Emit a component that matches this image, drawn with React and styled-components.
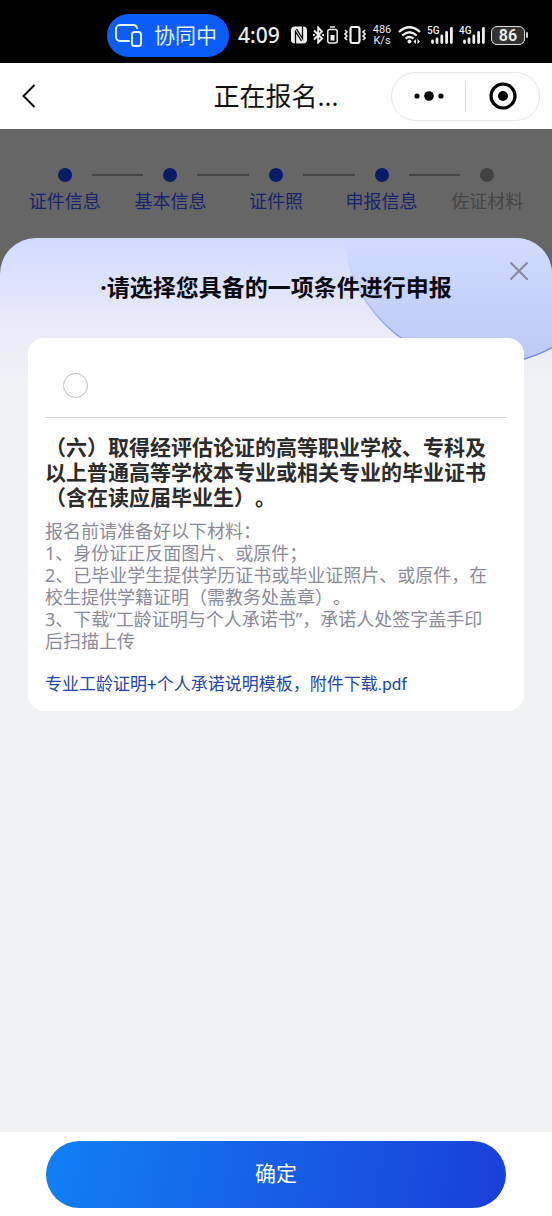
import React from "react";
import styled, { createGlobalStyle } from "styled-components";

const GlobalStyle = createGlobalStyle`
  *, *::before, *::after { box-sizing: border-box; }
  body {
    margin: 0;
    background: #f0f2f4;
    font-family: "Noto Sans", "Noto Sans CJK SC", sans-serif;
    text-spacing-trim: space-all;
  }
  button { font-family: inherit; }
  h1, h2, h3, p, ol { margin: 0; padding: 0; font-size: inherit; }
`;

const Page = styled.div`
  display: flex;
  flex-direction: column;
  min-height: 100vh;
  background: #666;
`;

const StatusBar = styled.header`
  display: flex;
  align-items: center;
  justify-content: flex-end;
  height: 63px;
  padding: 7px 24px 0 0;
  background: #000;
  color: #eee;
`;

const SyncPill = styled.div`
  display: flex;
  align-items: center;
  gap: 12px;
  height: 43px;
  padding: 0 12px 0 8px;
  margin-right: 9px;
  border-radius: 22px;
  background: #0b5cf8;
  color: #e2f1ff;
  font-size: 21px;
  line-height: 28px;
  white-space: nowrap;
`;

const Clock = styled.time`
  width: 53px;
  font-size: 21px;
  font-weight: 500;
  line-height: 28px;
`;

const StatusIcons = styled.div`
  display: flex;
  align-items: center;
  gap: 6px;
`;

const IconPair = styled.div`
  display: flex;
  align-items: center;
  gap: 3px;
`;

const NetSpeed = styled.div`
  width: 20px;
  font-family: Roboto, sans-serif;
  font-size: 11px;
  font-weight: 400;
  line-height: 11px;
  text-align: center;
`;

const SignalBox = styled.div`
  position: relative;
  display: flex;
  width: 26px;
  height: 19px;
`;

const SignalTag = styled.span`
  position: absolute;
  top: 0;
  left: 0;
  font-family: Roboto, sans-serif;
  font-size: 10px;
  font-weight: 500;
  line-height: 10px;
`;

const Battery = styled.div`
  display: flex;
  align-items: center;
  gap: 1px;
`;

const BatteryBody = styled.div`
  width: 34px;
  height: 19px;
  border: 1px solid #ddd;
  border-radius: 6px;
  background: #333;
  font-family: Roboto, sans-serif;
  font-size: 16px;
  font-weight: 600;
  line-height: 17px;
  text-align: center;
`;

const BatteryNub = styled.div`
  width: 2px;
  height: 6px;
  border-radius: 1px;
  background: #ccc;
`;

const NavBar = styled.nav`
  display: grid;
  grid-template-columns: 1fr auto 1fr;
  align-items: center;
  height: 66px;
  padding: 0 12px;
  background: #fff;
  color: #111;
`;

const IconButton = styled.button`
  display: flex;
  align-items: center;
  justify-content: center;
  width: ${(p) => p.$width}px;
  height: ${(p) => p.$height}px;
  padding: 0;
  border: 0;
  background: transparent;
  color: inherit;
  cursor: pointer;
`;

const NavTitle = styled.h1`
  font-size: 26px;
  font-weight: 400;
  line-height: 36px;
`;

const Capsule = styled.div`
  display: flex;
  align-items: center;
  justify-self: end;
  height: 49px;
  border: 1px solid #e6e6e6;
  border-radius: 25px;
`;

const CapsuleDivider = styled.span`
  width: 1px;
  height: 31px;
  background: #e2e2e2;
`;

const Steps = styled.ol`
  display: flex;
  height: 109px;
  padding: 39px 12px 0;
  list-style: none;
`;

const Step = styled.li`
  flex: 1;
  display: flex;
  flex-direction: column;
  gap: 6px;
  color: ${(p) => (p.$done ? "#16246b" : "#454545")};
  font-size: 18px;
  line-height: 26px;
  text-align: center;
  white-space: nowrap;
`;

const StepTrack = styled.div`
  display: grid;
  grid-template-columns: 1fr 14px 1fr;
  align-items: center;
  column-gap: 20px;
`;

const StepLine = styled.span`
  height: 2px;
  background: ${(p) => (p.$hidden ? "transparent" : "#454545")};
`;

const StepDot = styled.span`
  width: 14px;
  height: 14px;
  border-radius: 50%;
  background: ${(p) => (p.$done ? "#0a1c66" : "#424242")};
`;

const Sheet = styled.section`
  position: relative;
  flex: 1;
  display: flex;
  flex-direction: column;
  overflow: hidden;
  border-radius: 36px 36px 0 0;
  background: linear-gradient(#d0dbff 0, #eaebf9 90px, #f0f2f4 150px);
`;

const Decoration = styled.svg`
  position: absolute;
  top: 0;
  right: 0;
`;

const CloseButton = styled(IconButton)`
  position: absolute;
  top: 16px;
  right: 16px;
  color: #858a9b;
`;

const SheetBody = styled.div`
  position: relative;
  flex: 1;
  padding: 32px 28px;
`;

const SheetTitle = styled.h2`
  margin-bottom: 34px;
  color: #0a0a12;
  font-size: 23px;
  font-weight: 700;
  line-height: 34px;
  text-align: center;
`;

const Card = styled.article`
  padding: 0 17px 15px;
  border-radius: 16px;
  background: #fff;
`;

const CardHead = styled.div`
  display: flex;
  align-items: center;
  height: 80px;
  padding: 16px 18px 0;
  border-bottom: 1px solid #d8d8d8;
`;

const Radio = styled.input`
  appearance: none;
  width: 25px;
  height: 25px;
  margin: 0;
  border: 1px solid #bdbdbd;
  border-radius: 50%;
  background: #fff;
  &:checked { border: 7px solid #1a5be4; }
`;

const CardTitle = styled.label`
  display: block;
  padding: 17px 12px 0 0;
  color: #2b2b2b;
  font-size: 21px;
  font-weight: 700;
  line-height: 25px;
`;

const Notes = styled.div`
  padding: 10px 12px 0 0;
  color: #8a8a99;
  font-size: 18px;
  line-height: 22px;
`;

const Download = styled.a`
  display: block;
  margin-top: 20px;
  color: #2346a5;
  font-family: Roboto, "Noto Sans CJK SC", sans-serif;
  font-size: 17px;
  line-height: 24px;
  text-decoration: none;
`;

const Footer = styled.footer`
  padding: 9px 46px 8px;
  background: #fff;
`;

const Confirm = styled.button`
  display: block;
  width: 100%;
  height: 67px;
  padding: 0 0 4px;
  border: 0;
  border-radius: 34px;
  background: linear-gradient(100deg, #0f80f5, #1662e8 45%, #193fd8);
  color: #fff;
  font-size: 21px;
  line-height: 30px;
  cursor: pointer;
`;

const steps = [
  { label: "证件信息", done: true },
  { label: "基本信息", done: true },
  { label: "证件照", done: true },
  { label: "申报信息", done: true },
  { label: "佐证材料", done: false },
];

const notes = [
  "报名前请准备好以下材料：",
  "1、身份证正反面图片、或原件；",
  "2、已毕业学生提供学历证书或毕业证照片、或原件，在校生提供学籍证明（需教务处盖章）。",
  "3、下载“工龄证明与个人承诺书”，承诺人处签字盖手印后扫描上传",
];

const SyncIcon = () => (
  <svg width="27" height="23" viewBox="0 0 27 23" fill="none" stroke="currentColor" strokeWidth="2" strokeLinecap="round">
    <path d="M14 17H5a4 4 0 0 1-4-4V5a4 4 0 0 1 4-4h13a4 4 0 0 1 4 3" />
    <rect x="17" y="8" width="9" height="14" rx="2.5" />
  </svg>
);

const NfcIcon = () => (
  <svg width="16" height="18" viewBox="0 0 16 18" fill="none">
    <rect x="0" y="0.500" width="16" height="17" rx="4" fill="currentColor" />
    <path d="M4.500 18V5.500l6 9.500M11.500 0v12.500L5.500 3" stroke="#000" strokeWidth="1.300" />
  </svg>
);

const BluetoothIcon = () => (
  <svg width="11" height="18" viewBox="0 0 11 18" fill="none" stroke="currentColor" strokeWidth="1.900">
    <path d="M1 4.500l8 8-3.800 4V1.500l3.800 4-8 8" />
    <path d="M0 9h1.800M9.200 9H11" strokeWidth="2.200" />
  </svg>
);

const DeviceBatteryIcon = () => (
  <svg width="11" height="18" viewBox="0 0 11 18" fill="none">
    <path d="M3 1h5" stroke="currentColor" strokeWidth="1.500" />
    <rect x="0.800" y="3.500" width="9.400" height="13.500" rx="2" stroke="currentColor" strokeWidth="1.500" />
    <path d="M3.500 9h4v5.500h-4z" fill="currentColor" />
  </svg>
);

const VibrateIcon = () => (
  <svg width="22" height="18" viewBox="0 0 22 18" fill="none" stroke="currentColor" strokeWidth="1.600">
    <rect x="6.500" y="1" width="9" height="16" rx="2" strokeWidth="2.200" />
    <path d="M1 4l2 2-2 2 2 2-2 2 2 2M21 4l-2 2 2 2-2 2 2 2-2 2" />
  </svg>
);

const WifiIcon = () => (
  <svg width="23" height="18" viewBox="0 0 23 18" fill="none" stroke="currentColor" strokeWidth="2.300">
    <path d="M1 6q10.500-9.500 21 0M4.300 9.500q7.200-6.500 14.400 0M7.500 12.700q4-3.500 8 0" />
    <circle cx="11.500" cy="15.500" r="2" fill="currentColor" stroke="none" />
    <path d="M18 13v5l-2.500-2.500zM19.500 13v5l2.500-2.500z" fill="currentColor" stroke="none" />
  </svg>
);

const Signal = ({ tag }) => (
  <SignalBox>
    <svg width="26" height="19" viewBox="0 0 26 19" fill="none" stroke="currentColor" strokeWidth="2.800" strokeLinecap="round">
      <path d="M5.500 15v1.500M10 13v3.500M14.800 10v6.500M19.600 6.500v10M24.400 2.500v14" />
    </svg>
    <SignalTag>{tag}</SignalTag>
  </SignalBox>
);

export default function App() {
  return (
    <>
      <GlobalStyle />
      <Page>
        <StatusBar>
          <SyncPill>
            <SyncIcon />
            协同中
          </SyncPill>
          <Clock>4:09</Clock>
          <StatusIcons>
            <NfcIcon />
            <IconPair>
              <BluetoothIcon />
              <DeviceBatteryIcon />
            </IconPair>
            <VibrateIcon />
            <NetSpeed>486 K/s</NetSpeed>
            <WifiIcon />
            <Signal tag="5G" />
            <Signal tag="4G" />
            <Battery>
              <BatteryBody>86</BatteryBody>
              <BatteryNub />
            </Battery>
          </StatusIcons>
        </StatusBar>

        <NavBar>
          <IconButton type="button" aria-label="返回" $width={34} $height={44}>
            <svg width="14" height="24" viewBox="0 0 14 24" fill="none" stroke="currentColor" strokeWidth="2">
              <path d="M12.500 1L1.500 12l11 11" />
            </svg>
          </IconButton>
          <NavTitle>正在报名...</NavTitle>
          <Capsule>
            <IconButton type="button" aria-label="更多" $width={73} $height={47}>
              <svg width="30" height="10" viewBox="0 0 30 10" fill="#000">
                <circle cx="3" cy="5" r="2.600" />
                <circle cx="15" cy="5" r="4.800" />
                <circle cx="27" cy="5" r="2.600" />
              </svg>
            </IconButton>
            <CapsuleDivider />
            <IconButton type="button" aria-label="关闭小程序" $width={73} $height={47}>
              <svg width="28" height="28" viewBox="0 0 28 28" fill="none">
                <circle cx="14" cy="14" r="12" stroke="#000" strokeWidth="3.200" />
                <circle cx="14" cy="14" r="5" fill="#000" />
              </svg>
            </IconButton>
          </Capsule>
        </NavBar>

        <Steps>
          {steps.map((step, i) => (
            <Step key={step.label} $done={step.done}>
              <StepTrack>
                <StepLine $hidden={i === 0} />
                <StepDot $done={step.done} />
                <StepLine $hidden={i === steps.length - 1} />
              </StepTrack>
              {step.label}
            </Step>
          ))}
        </Steps>

        <Sheet role="dialog" aria-labelledby="sheet-title">
          <Decoration width="210" height="130" viewBox="0 0 210 130" aria-hidden="true">
            <defs>
              <linearGradient id="disc" x1="0" y1="0" x2="0" y2="130" gradientUnits="userSpaceOnUse">
                <stop offset="0" stopColor="#d0dbff" />
                <stop offset="1" stopColor="#bcc8f3" />
              </linearGradient>
              <linearGradient id="rim" x1="0" y1="20" x2="0" y2="130" gradientUnits="userSpaceOnUse">
                <stop offset="0" stopColor="#7f98e6" stopOpacity="0" />
                <stop offset="1" stopColor="#5f7de0" />
              </linearGradient>
            </defs>
            <circle cx="142" cy="-14" r="141" fill="url(#disc)" stroke="url(#rim)" strokeWidth="1.500" />
          </Decoration>
          <SheetBody>
            <SheetTitle id="sheet-title">·请选择您具备的一项条件进行申报</SheetTitle>
            <Card>
              <CardHead>
                <Radio type="radio" name="condition" id="condition-6" />
              </CardHead>
              <CardTitle htmlFor="condition-6">
                （六）取得经评估论证的高等职业学校、专科及以上普通高等学校本专业或相关专业的毕业证书（含在读应届毕业生）。
              </CardTitle>
              <Notes>
                {notes.map((text) => (
                  <p key={text}>{text}</p>
                ))}
              </Notes>
              <Download href="#template">专业工龄证明+个人承诺说明模板，附件下载.pdf</Download>
            </Card>
          </SheetBody>
          <CloseButton type="button" aria-label="关闭" $width={34} $height={34}>
            <svg width="18" height="18" viewBox="0 0 18 18" fill="none" stroke="currentColor" strokeWidth="2" strokeLinecap="round">
              <path d="M1 1l16 16M17 1L1 17" />
            </svg>
          </CloseButton>
          <Footer>
            <Confirm type="button">确定</Confirm>
          </Footer>
        </Sheet>
      </Page>
    </>
  );
}
